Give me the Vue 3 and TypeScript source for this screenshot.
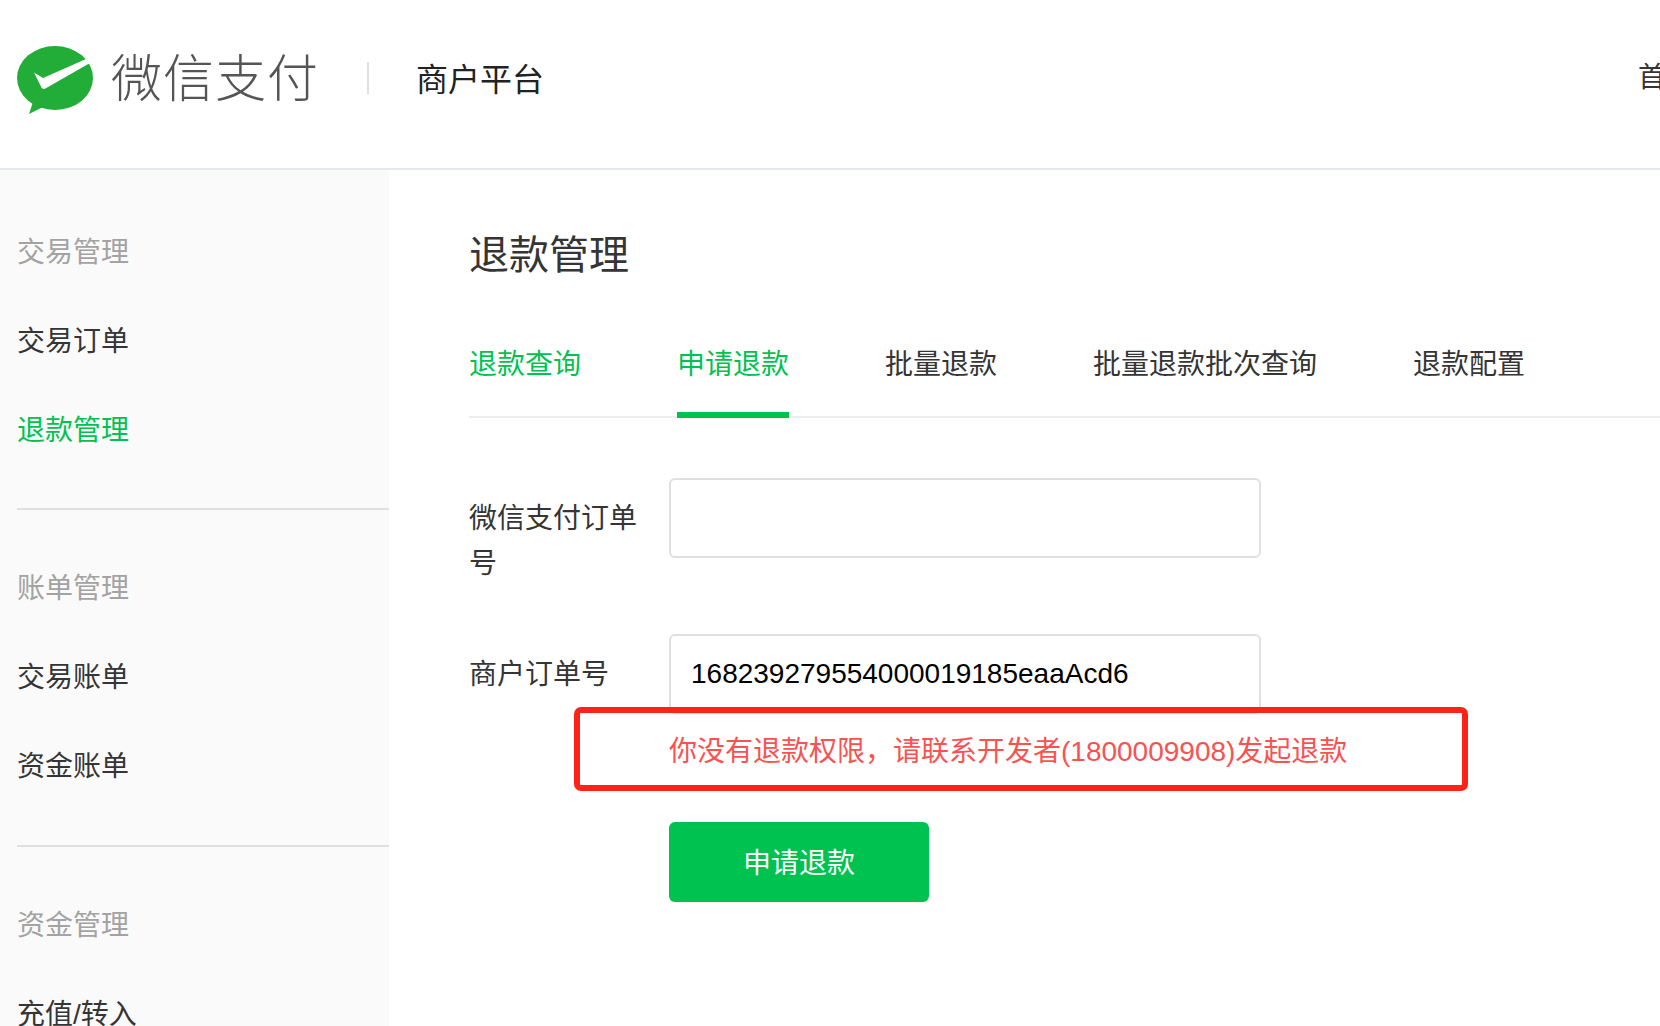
<script setup lang="ts">
interface NavGroup {
  title: string
  items: string[]
}

const groups: NavGroup[] = [
  { title: '交易管理', items: ['交易订单', '退款管理'] },
  { title: '账单管理', items: ['交易账单', '资金账单'] },
  { title: '资金管理', items: ['充值/转入'] },
]
const tabs = ['退款查询', '申请退款', '批量退款', '批量退款批次查询', '退款配置']
const activeItem = '退款管理'
</script>

<template>
  <div class="page">
    <header class="header">
      <svg class="logo" viewBox="17 40 80 80" width="80" height="80" aria-hidden="true">
        <ellipse cx="55" cy="78" rx="38" ry="32" fill="#22ac38" />
        <path d="M33 102 L29 114 L45 106 Z" fill="#22ac38" />
        <path d="M34 72.5 L43 78 L86 59 L90 63 L44.5 89 L42 88.5 Z" fill="#fff" />
      </svg>
      <span class="brand">微信支付</span>
      <i class="brand-sep"></i>
      <span class="platform">商户平台</span>
      <nav class="top-nav">首页</nav>
    </header>

    <div class="body">
      <aside class="sidebar">
        <section v-for="group in groups" :key="group.title" class="group">
          <h3 class="group-title">{{ group.title }}</h3>
          <a
            v-for="item in group.items"
            :key="item"
            class="group-item"
            :class="{ 'group-item--active': item === activeItem }"
          >{{ item }}</a>
        </section>
      </aside>

      <main class="main">
        <h1 class="title">退款管理</h1>
        <div class="tabs">
          <a
            v-for="(tab, i) in tabs"
            :key="tab"
            class="tab"
            :class="{ 'tab--green': i < 2, 'tab--active': i === 1 }"
          >{{ tab }}</a>
        </div>

        <form class="form" @submit.prevent>
          <div class="row row--first">
            <label class="label">微信支付订单号</label>
            <input class="input" type="text" />
          </div>
          <div class="row">
            <label class="label">商户订单号</label>
            <input class="input" type="text" value="168239279554000019185eaaAcd6" />
          </div>
          <p class="error">你没有退款权限，请联系开发者(1800009908)发起退款</p>
          <button class="submit" type="submit">申请退款</button>
          <div class="annotation"></div>
        </form>
      </main>
    </div>
  </div>
</template>

<style>
html,
body {
  margin: 0;
  background: #fff;
  overflow: hidden;
}
</style>

<style scoped>
.page {
  width: 1660px;
  height: 1026px;
  overflow: hidden;
  font-family: "Liberation Sans", "Noto Sans CJK SC", sans-serif;
  font-size: 28px;
  color: #353535;
  background: #fff;
}

.header {
  display: flex;
  align-items: center;
  height: 168px;
  box-sizing: content-box;
  border-bottom: 2px solid #e6e8ef;
  padding-left: 17px;
  white-space: nowrap;
}

.header > * {
  flex: none;
}

.logo {
  margin-top: -8px;
}

.brand {
  margin-left: 14px;
  font-size: 51px;
  letter-spacing: 1px;
  font-weight: 300;
  color: #555;
  line-height: 60px;
  margin-top: -8px;
}

.brand-sep {
  width: 2px;
  height: 32px;
  margin-left: 48px;
  margin-top: -12px;
  background: #e0e0e0;
}

.platform {
  margin-left: 47px;
  font-size: 32px;
  color: #222;
  margin-top: -14px;
}

.top-nav {
  margin-left: 1094px;
  margin-top: -18px;
}

.body {
  display: flex;
  height: 856px;
}

.sidebar {
  flex: none;
  width: 389px;
  padding-top: 4px;
  box-sizing: border-box;
  background: #fafafa;
}

.group {
  margin-left: 17px;
  padding: 34px 0;
  border-bottom: 2px solid #e0e0e0;
}

.group:first-child {
  padding-bottom: 33px;
}

.group-title,
.group-item {
  display: block;
  margin: 0;
  font-size: 28px;
  font-weight: 400;
  line-height: 89px;
}

.group-title {
  color: #a3a3a3;
}

.group-item--active {
  color: #00c250;
}

.main {
  flex: 1;
  min-width: 0;
  padding-left: 80px;
}

.title {
  margin: 57px 0 0;
  font-size: 40px;
  font-weight: 400;
  line-height: 56px;
}

.tabs {
  display: flex;
  gap: 96px;
  margin-top: 62px;
  padding-bottom: 31px;
  border-bottom: 2px solid #eee;
  line-height: 40px;
}

.tab {
  position: relative;
}

.tab--green {
  color: #00c250;
}

.tab--active::after {
  content: "";
  position: absolute;
  left: 0;
  right: 0;
  bottom: -33px;
  height: 6px;
  background: #00c250;
}

.form {
  position: relative;
  margin-top: 60px;
}

.row {
  display: flex;
  align-items: flex-start;
  line-height: 45px;
}

.row--first {
  margin-bottom: 48px;
}

.label {
  flex: none;
  width: 200px;
  padding: 18px 30px 0 0;
  box-sizing: border-box;
}

.input {
  width: 592px;
  height: 80px;
  padding: 0 20px;
  box-sizing: border-box;
  border: 2px solid #e0e0e0;
  border-radius: 6px;
  outline: none;
  font: inherit;
  color: #000;
  background: #fff;
}

.error {
  margin: 15px 0 0 200px;
  line-height: 45px;
  color: #fa5151;
  white-space: nowrap;
}

.submit {
  display: block;
  width: 260px;
  height: 80px;
  margin: 48px 0 0 200px;
  padding: 0 0 3px;
  border: none;
  border-radius: 6px;
  font: inherit;
  color: #fff;
  background: #00c250;
}

.annotation {
  position: absolute;
  left: 105px;
  top: 229px;
  width: 894px;
  height: 84px;
  box-sizing: border-box;
  border: 6px solid #ff2317;
  border-radius: 7px;
}
</style>
